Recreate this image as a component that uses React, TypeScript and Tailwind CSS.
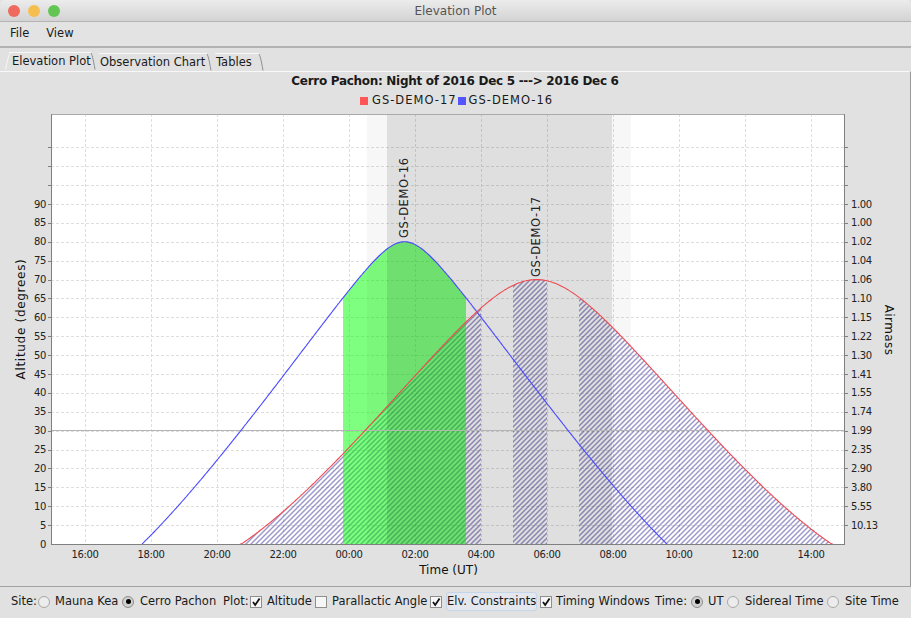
import { ReactNode } from "react";

// plot geometry, in page pixels
const LEFT = 51;
const RIGHT = 845;
const TOP = 114;
const BOTTOM = 544;
const PX_PER_DEG = 340 / 90;
const PX_PER_HOUR = 33;
const LAT = -30.24;

const HOURS = ["16:00", "18:00", "20:00", "22:00", "00:00", "02:00", "04:00", "06:00", "08:00", "10:00", "12:00", "14:00"];
const AIRMASS = ["10.13", "5.55", "3.80", "2.90", "2.35", "1.99", "1.74", "1.55", "1.41", "1.30", "1.22", "1.15", "1.10", "1.06", "1.04", "1.02", "1.00", "1.00"];

const rad = (d: number) => (d * Math.PI) / 180;

function altitude(x: number, centerX: number, dec: number) {
  const h = ((x - centerX) / PX_PER_HOUR) * 15.04;
  const s = Math.sin(rad(dec)) * Math.sin(rad(LAT)) + Math.cos(rad(dec)) * Math.cos(rad(LAT)) * Math.cos(rad(h));
  return (Math.asin(s) * 180) / Math.PI;
}

function curve(centerX: number, dec: number) {
  const pts: string[] = [];
  for (let x = LEFT; x <= RIGHT; x += 1) {
    const alt = altitude(x, centerX, dec);
    if (alt >= -0.3) pts.push(`${x},${(BOTTOM - Math.max(alt, 0) * PX_PER_DEG).toFixed(1)}`);
  }
  return pts;
}

const blue = curve(404.5, -40.24);
const red = curve(536.5, -50.24);
const area = (pts: string[]) => `M${pts[0].split(",")[0]},${BOTTOM} L${pts.join(" L")} L${pts[pts.length - 1].split(",")[0]},${BOTTOM} Z`;

function Chart() {
  const yTicks = Array.from({ length: 22 }, (_, i) => i * 5).filter((v) => v > 0);
  return (
    <svg viewBox="0 110 911 476" className="block h-[476px] w-[911px]" fontFamily="'DejaVu Sans', sans-serif">
      <defs>
        <pattern id="hatch" width="5" height="5" patternUnits="userSpaceOnUse">
          <path d="M-1,1 L1,-1 M0,5 L5,0 M4,6 L6,4" stroke="#3c3296" strokeOpacity="0.5" strokeWidth="1.5" />
        </pattern>
        <clipPath id="underRed">
          <path d={area(red)} />
        </clipPath>
        <clipPath id="underBlue">
          <path d={area(blue)} />
        </clipPath>
      </defs>

      <rect x={LEFT} y={TOP} width={RIGHT - LEFT} height={BOTTOM - TOP} fill="#fff" />

      {yTicks.map((v) => {
        const y = Math.round(BOTTOM - v * PX_PER_DEG) + 0.5;
        return <line key={v} x1={LEFT} x2={RIGHT} y1={y} y2={y} stroke="#dedede" strokeDasharray="3 2" />;
      })}
      {HOURS.map((_, i) => (
        <line key={i} x1={85.5 + i * 66} x2={85.5 + i * 66} y1={TOP} y2={BOTTOM} stroke="#dedede" strokeDasharray="3 2" />
      ))}

      {/* timing window hatching under the GS-DEMO-17 curve */}
      <g clipPath="url(#underRed)" fill="url(#hatch)">
        <rect x={LEFT} y={TOP} width={481 - LEFT} height={BOTTOM - TOP} />
        <rect x={513} y={TOP} width={34} height={BOTTOM - TOP} />
        <rect x={579} y={TOP} width={RIGHT - 579} height={BOTTOM - TOP} />
      </g>

      {/* elevation constraint */}
      <g clipPath="url(#underBlue)">
        <rect x={343} y={TOP} width={123} height={BOTTOM - TOP} fill="#00ff00" fillOpacity="0.5" />
      </g>

      {/* twilight and night */}
      <rect x={367} y={TOP} width={20} height={BOTTOM - TOP} fill="#000" fillOpacity="0.03" />
      <rect x={612} y={TOP} width={19} height={BOTTOM - TOP} fill="#000" fillOpacity="0.03" />
      <rect x={387} y={TOP} width={225} height={BOTTOM - TOP} fill="#000" fillOpacity="0.125" />

      <line x1={LEFT} x2={RIGHT} y1={430.5} y2={430.5} stroke="#b4b4b4" />

      <polyline points={blue.join(" ")} fill="none" stroke="#4a4aff" strokeWidth="1.1" />
      <polyline points={red.join(" ")} fill="none" stroke="#f04a50" strokeWidth="1.1" />

      <text transform="translate(408,238) rotate(-90)" fontSize="11.5" fill="#222" letterSpacing="0.6">GS-DEMO-16</text>
      <text transform="translate(540,277) rotate(-90)" fontSize="11.5" fill="#222" letterSpacing="0.6">GS-DEMO-17</text>

      {/* axes */}
      <line x1={LEFT} x2={RIGHT} y1={114.5} y2={114.5} stroke="#aaa" />
      <line x1={51.5} x2={51.5} y1={TOP} y2={BOTTOM + 1} stroke="#808080" />
      <line x1={844.5} x2={844.5} y1={TOP} y2={BOTTOM + 1} stroke="#808080" />
      <line x1={LEFT} x2={RIGHT} y1={544.5} y2={544.5} stroke="#808080" />

      {yTicks.map((v) => {
        const y = Math.round(BOTTOM - v * PX_PER_DEG) + 0.5;
        return (
          <g key={v}>
            <line x1={48} x2={LEFT} y1={y} y2={y} stroke="#808080" />
            <line x1={845} x2={848} y1={y} y2={y} stroke="#808080" />
          </g>
        );
      })}

      <g fontSize="10" fill="#222" letterSpacing="-0.35">
        {Array.from({ length: 19 }, (_, i) => i * 5).map((v) => (
          <text key={v} x={46} y={BOTTOM - v * PX_PER_DEG + 3.5} textAnchor="end">{v}</text>
        ))}
        {AIRMASS.map((label, i) => (
          <text key={i} x={851} y={BOTTOM - (i + 1) * 5 * PX_PER_DEG + 3.5}>{label}</text>
        ))}
        {HOURS.map((label, i) => (
          <text key={label} x={85 + i * 66} y={558} textAnchor="middle">{label}</text>
        ))}
      </g>

      <g fontSize="12" fill="#111">
        <text x={448.5} y={574} textAnchor="middle">Time (UT)</text>
        <text transform="translate(25,319) rotate(-90)" textAnchor="middle" letterSpacing="0.7">Altitude (degrees)</text>
        <text transform="translate(885,330) rotate(90)" textAnchor="middle" letterSpacing="0.4">Airmass</text>
      </g>
    </svg>
  );
}

function Tab({ label, active, width }: { label: string; active?: boolean; width: string }) {
  return (
    <div className={`relative flex items-center pt-px ${width} ${active ? "h-[19px] pl-[7px]" : "mt-px h-[18px] pl-[5px]"}`}>
      {active && (
        <svg viewBox="0 0 6 18" className="absolute top-0 left-0 h-[18px] w-[6px]">
          <path d="M5.5,0.5 C4,2 3,6 0.5,17.5" fill="none" stroke="#f7f7f7" />
        </svg>
      )}
      <span className="whitespace-nowrap">{label}</span>
      <svg viewBox="0 0 6 18" className="absolute top-0 -right-[1px] h-[18px] w-[6px]">
        <path d="M0.5,0.5 C2,2 3,6 5,17.5" fill="none" stroke="#8e8e8e" />
      </svg>
      <div className="absolute top-0 right-[4px] left-[4px] h-px bg-[#f7f7f7]" />
    </div>
  );
}

function Radio({ on }: { on?: boolean }) {
  return (
    <span className={`flex h-[12px] w-[12px] shrink-0 items-center justify-center rounded-full border ${on ? "border-[#8c8c8c] bg-[#d0d0d0]" : "border-[#a8a8a8] bg-[#ececec]"}`}>
      {on && <span className="h-[5px] w-[5px] rounded-full bg-black" />}
    </span>
  );
}

function Check({ on }: { on?: boolean }) {
  return (
    <span className="flex h-[12px] w-[12px] shrink-0 items-center justify-center border border-[#8f8f8f] bg-[#f6f6f6]">
      {on && (
        <svg viewBox="0 0 10 10" className="h-[10px] w-[10px]">
          <path d="M2,5 L4.2,8 L8.6,1.5" fill="none" stroke="#111" strokeWidth="1.8" />
        </svg>
      )}
    </span>
  );
}

function Opt({ children, className }: { children: ReactNode; className: string }) {
  return <div className={`flex items-center ${className}`}>{children}</div>;
}

export default function App() {
  return (
    <div className="flex h-[618px] w-[911px] flex-col overflow-hidden bg-[#e1e1e1] font-['DejaVu_Sans',sans-serif] text-[11.5px] text-[#1a1a1a]">
      <div className="relative flex h-[22px] shrink-0 items-center justify-center rounded-t-[5px] border-b border-[#b4b4b4] bg-gradient-to-b from-[#ececec] to-[#d3d3d3] text-[12px] text-[#555]">
        <div className="absolute top-[5px] left-[8px] flex gap-[8px]">
          <span className="h-[12px] w-[12px] rounded-full bg-[#ee6a5f]" />
          <span className="h-[12px] w-[12px] rounded-full bg-[#f5bf4f]" />
          <span className="h-[12px] w-[12px] rounded-full bg-[#62c554]" />
        </div>
        Elevation Plot
      </div>

      <div className="flex h-[26px] shrink-0 items-center gap-[17px] border-b-2 border-[#b2b2b2] bg-[#e3e3e3] pl-[10px]">
        <span>File</span>
        <span>View</span>
      </div>

      <div className="flex h-[23px] shrink-0 items-end pl-[5px]">
        <Tab label="Elevation Plot" active width="w-[90px]" />
        <Tab label="Observation Chart" width="w-[116px]" />
        <Tab label="Tables" width="w-[52px]" />
      </div>

      <div className="flex h-[515px] shrink-0 flex-col border-t border-r border-t-[#f8f8f8] border-r-[#9a9a9a]">
        <div className="flex h-[15px] items-end justify-center text-[12px] leading-none font-bold tracking-[-0.3px]">
          Cerro Pachon: Night of 2016 Dec 5 ---&gt; 2016 Dec 6
        </div>
        <div className="flex h-[23px] items-center pt-[5px] pl-[360px] text-[11.5px] tracking-[1px]">
          <span className="mr-[4px] h-[8px] w-[8px] bg-[#ff5555]" />
          <span>GS-DEMO-17</span>
          <span className="mr-[3px] ml-[1px] h-[8px] w-[8px] bg-[#5555ff]" />
          <span>GS-DEMO-16</span>
        </div>
        <Chart />
      </div>

      <div className="flex flex-1 items-center rounded-b-[5px] border-t border-[#a2a2a2] pb-[2px] pl-[11px] whitespace-nowrap">
        <span className="w-[27px]">Site:</span>
        <Opt className="w-[84px] gap-[5px]"><Radio /> Mauna Kea</Opt>
        <Opt className="w-[101px] gap-[6px]"><Radio on /> Cerro Pachon</Opt>
        <span className="w-[27px]">Plot:</span>
        <Opt className="w-[65px] gap-[5px]"><Check on /> Altitude</Opt>
        <Opt className="w-[115px] gap-[5px]"><Check /> Parallactic Angle</Opt>
        <Opt className="w-[110px] gap-[5px]">
          <Check on />
          <span className="rounded-[2px] bg-[#e4e8ee] outline outline-[#c4d6ea]">Elv. Constraints</span>
        </Opt>
        <Opt className="w-[115px] gap-[4px]"><Check on /> Timing Windows</Opt>
        <span className="w-[36px]">Time:</span>
        <Opt className="w-[36px] gap-[5px]"><Radio on /> UT</Opt>
        <Opt className="w-[100px] gap-[6px]"><Radio /> Sidereal Time</Opt>
        <Opt className="gap-[6px]"><Radio /> Site Time</Opt>
      </div>
    </div>
  );
}
